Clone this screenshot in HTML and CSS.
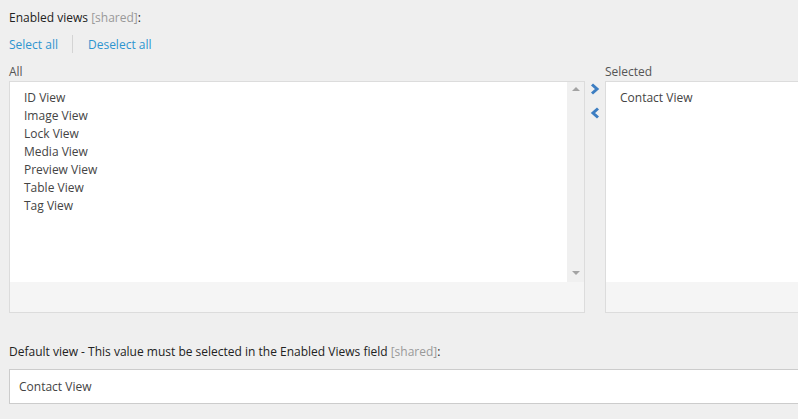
FILE: index.html
```html
<!DOCTYPE html>
<html>
<head>
<meta charset="utf-8">
<link rel="stylesheet" href="styles.css">
</head>
<body>
<div class="page">
  <div class="label">Enabled views <span class="shared">[shared]</span>:</div>
  <div class="links">
    <a class="link">Select all</a>
    <span class="sep"></span>
    <a class="link">Deselect all</a>
  </div>
  <div class="dual">
    <div class="col-all">
      <div class="col-label">All</div>
      <div class="box">
        <div class="box-body">
          <ul class="items">
            <li>ID View</li>
            <li>Image View</li>
            <li>Lock View</li>
            <li>Media View</li>
            <li>Preview View</li>
            <li>Table View</li>
            <li>Tag View</li>
          </ul>
          <div class="scroll">
            <span class="tri up"></span>
            <span class="tri down"></span>
          </div>
        </div>
        <div class="box-foot"></div>
      </div>
    </div>
    <div class="arrows">
      <svg width="10" height="12" viewBox="0 0 10 12"><path d="M2 1.5 L7 6 L2 10.5" fill="none" stroke="#3d7ec2" stroke-width="3"/></svg>
      <svg width="10" height="12" viewBox="0 0 10 12"><path d="M8 1.5 L3 6 L8 10.5" fill="none" stroke="#3d7ec2" stroke-width="3"/></svg>
    </div>
    <div class="col-sel">
      <div class="col-label">Selected</div>
      <div class="box">
        <div class="box-body">
          <ul class="items">
            <li>Contact View</li>
          </ul>
        </div>
        <div class="box-foot"></div>
      </div>
    </div>
  </div>
  <div class="label label-default">Default view - This value must be selected in the Enabled Views field <span class="shared">[shared]</span>:</div>
  <div class="input">Contact View</div>
</div>
</body>
</html>
```
FILE: styles.css
```css
html, body {
  margin: 0;
  padding: 0;
  background: #efefef;
  overflow: hidden;
}
body {
  font-family: "Open Sans", "Noto Sans", sans-serif;
  font-size: 12px;
  color: #333;
  width: 798px;
  height: 419px;
}
.page {
  padding: 9px 0 0 9px;
}
.label {
  line-height: 18px;
  color: #222;
}
.shared {
  color: #999;
}
.links {
  display: flex;
  align-items: center;
  height: 18px;
  margin-top: 8px;
}
.link {
  color: #2e95cf;
  cursor: pointer;
}
.sep {
  width: 1px;
  height: 18px;
  background: #d4d4d4;
  margin: 0 15px 0 14px;
}
.dual {
  display: flex;
  margin-top: 10px;
}
.col-label {
  line-height: 18px;
  color: #555;
}
.col-all {
  width: 576px;
}
.col-sel {
  flex: 1;
}
.box {
  border: 1px solid #dcdcdc;
  background: #f5f5f5;
  height: 230px;
  display: flex;
  flex-direction: column;
}
.col-sel .box {
  border-right: none;
}
.box-body {
  background: #fff;
  height: 200px;
  display: flex;
}
.items {
  list-style: none;
  margin: 0;
  padding: 7px 0 0 14px;
  flex: 1;
  line-height: 18px;
  color: #444;
}
.scroll {
  width: 17px;
  background: #f0f0f0;
  position: relative;
}
.tri {
  position: absolute;
  left: 5px;
  width: 0;
  height: 0;
  border-left: 4px solid transparent;
  border-right: 4px solid transparent;
}
.tri.up {
  top: 5px;
  border-bottom: 4px solid #a3a3a3;
}
.tri.down {
  bottom: 7px;
  border-top: 4px solid #a3a3a3;
}
.box-foot {
  flex: 1;
}
.arrows {
  width: 20px;
  padding-top: 20px;
  display: flex;
  flex-direction: column;
  align-items: center;
  gap: 12px;
}
.arrows svg {
  display: block;
  margin-left: -1px;
}
.label-default {
  margin-top: 30px;
}
.input {
  margin-top: 8px;
  background: #fff;
  border: 1px solid #cccccc;
  border-right: none;
  height: 33px;
  line-height: 33px;
  padding-left: 9px;
  color: #444;
}
```
